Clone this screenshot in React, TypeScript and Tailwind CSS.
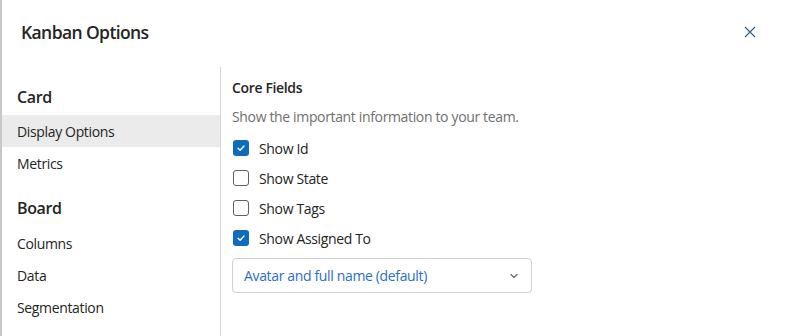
import React from "react";

const font = { fontFamily: '"Segoe UI", "Open Sans", "Noto Sans", sans-serif' };

function Check({ checked }: { checked: boolean }) {
  return checked ? (
    <span className="flex h-4 w-4 items-center justify-center rounded-[3px] bg-[#0f6cbd]">
      <svg width="10" height="10" viewBox="0 0 10 10" fill="none">
        <path d="M2 5.2 L4.1 7.2 L8 3" stroke="white" strokeWidth="1.3" strokeLinecap="round" strokeLinejoin="round" />
      </svg>
    </span>
  ) : (
    <span className="h-4 w-4 rounded-[3px] border border-[#616161] bg-white" />
  );
}

export default function App() {
  const rows: [string, boolean][] = [
    ["Show Id", true],
    ["Show State", false],
    ["Show Tags", false],
    ["Show Assigned To", true],
  ];
  return (
    <div className="h-[336px] w-[794px] overflow-hidden border-l-2 border-[#c8c8c8] bg-white text-[#242424] tracking-[-0.35px]" style={font}>
      <div className="flex h-[67px] items-center justify-between pb-[3px] pl-[19px] pr-[38px]">
        <h1 className="text-[17.5px] font-semibold tracking-[-0.6px]">Kanban Options</h1>
        <svg width="12" height="12" viewBox="0 0 12 12" fill="none">
          <path d="M1 1 L11 11 M11 1 L1 11" stroke="#2f5d95" strokeWidth="1.2" />
        </svg>
      </div>
      <div className="flex">
        <nav className="w-[218px] pt-[12px]">
          <div className="flex h-[36px] items-center pl-[15px] text-[16px] font-semibold">Card</div>
          <div className="flex h-[32px] items-center bg-[#ebebeb] pl-[15px] text-[14px]">Display Options</div>
          <div className="flex h-[32px] items-center pl-[15px] text-[14px]">Metrics</div>
          <div className="flex h-[48px] items-center pl-[15px] pt-[10px] text-[16px] font-semibold">Board</div>
          <div className="flex h-[32px] items-center pl-[15px] text-[14px]">Columns</div>
          <div className="flex h-[32px] items-center pl-[15px] text-[14px]">Data</div>
          <div className="flex h-[32px] items-center pl-[15px] text-[14px]">Segmentation</div>
        </nav>
        <div className="h-[269px] w-px bg-[#d6d6d6]" />
        <main className="flex-1 pl-[11px] pt-[10px]">
          <h2 className="text-[14px] font-semibold leading-[22px]">Core Fields</h2>
          <p className="mt-[8px] text-[14px] leading-[20px] text-[#707070]">Show the important information to your team.</p>
          <div className="mt-[6px] flex flex-col">
            {rows.map(([label, c]) => (
              <label key={label} className="flex h-[30px] items-center gap-[10px] pl-[1px] text-[14px]">
                <Check checked={c} />
                <span>{label}</span>
              </label>
            ))}
          </div>
          <div className="mt-[5px] flex h-[35px] w-[300px] items-center justify-between rounded-[4px] border border-[#d1d1d1] pl-[11px] pr-[12px] text-[14px] text-[#2a6fc4]">
            <span>Avatar and full name (default)</span>
            <svg width="10" height="10" viewBox="0 0 10 10" fill="none">
              <path d="M2 3.5 L5 6.5 L8 3.5" stroke="#707070" strokeWidth="1.4" strokeLinecap="round" strokeLinejoin="round" />
            </svg>
          </div>
        </main>
      </div>
    </div>
  );
}
